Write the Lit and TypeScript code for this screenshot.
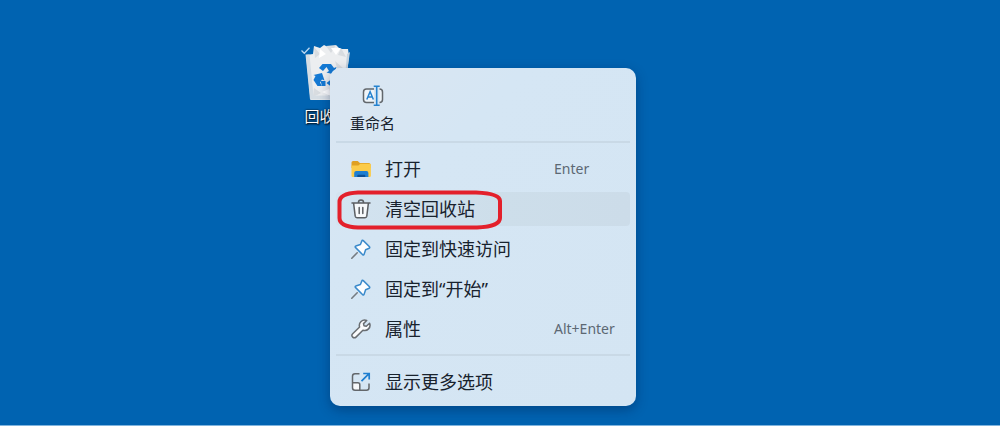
import { LitElement, html, css, svg, nothing } from "lit";
import { customElement, property } from "lit/decorators.js";

const icons = {
  folder: svg`
    <path d="M0.5 3.500a1.600 1.600 0 0 1 1.600-1.600h4.600l2.200 2h9a1.600 1.600 0 0 1 1.600 1.600V9h-19z" fill="#e0a021"/>
    <path d="M0.5 6.400h6.900l1.900-1.600h9.600a1 1 0 0 1 1 1v10.900a1.300 1.300 0 0 1-1.300 1.300H1.800a1.300 1.300 0 0 1-1.300-1.300z" fill="#fbcb49"/>
    <path d="M3.200 18v-3.900a2 2 0 0 1 2-2h10.200a2 2 0 0 1 2 2V18z" fill="#1d7fd2"/>
    <path d="M6.300 18v-1.200a1 1 0 0 1 1-1h6a1 1 0 0 1 1 1V18z" fill="#0c4f94"/>`,
  trash: svg`
    <path d="M2.600 4.200l1.600 13a1.800 1.800 0 0 0 1.800 1.500h8a1.800 1.800 0 0 0 1.800-1.500l1.600-13z" fill="#f7f9fb"/>
    <path d="M1 3.900h18M7.400 3.700a2.600 2.600 0 0 1 5.200 0M2.600 4.200l1.600 13a1.800 1.800 0 0 0 1.800 1.500h8a1.800 1.800 0 0 0 1.800-1.500l1.600-13M8.200 8.500v6M11.800 8.500v6" fill="none" stroke="#5b5e62" stroke-width="1.500" stroke-linecap="round"/>`,
  pin: svg`
    <path d="M6.200 13.800L0.8 19.200" stroke="#777c81" stroke-width="1.600" stroke-linecap="round"/>
    <path d="M12.300 1.600l6.200 6.200c.5.5.3 1.200-.3 1.400l-3.600 1.500-1.500 4.600c-.2.7-.9.9-1.400.4L4.400 8.400c-.5-.5-.3-1.200.4-1.400l4.600-1.500L10.900 1.900c.2-.6.9-.8 1.400-.3z" fill="#fbfdff" stroke="#3a8acb" stroke-width="1.500" stroke-linejoin="round"/>`,
  wrench: svg`
    <path d="M15.700 1.500a5.300 5.300 0 0 0-7.100 6.500L1.700 14.800a2.300 2.300 0 0 0 3.300 3.300l6.900-6.900a5.300 5.300 0 0 0 6.700-7l-3.300 3.100-2.300-.5-.5-2.200z" fill="#fbfcfd" stroke="#6a6e72" stroke-width="1.500" stroke-linejoin="round"/>`,
  more: svg`
    <path d="M1.500 10.700h5.300a2 2 0 0 1 2 2v5.500H4a2.500 2.500 0 0 1-2.500-2.500z" fill="#f7f9fb"/>
    <path d="M8.500 1.700H4a2.500 2.500 0 0 0-2.500 2.500v11.500A2.500 2.500 0 0 0 4 18.200h11.500a2.500 2.500 0 0 0 2.500-2.500V11.500M1.500 10.700h5.300a2 2 0 0 1 2 2v5.500" fill="none" stroke="#63676b" stroke-width="1.500"/>
    <path d="M10.500 9.200L18 1.700M12.200 1.500h6v6" fill="none" stroke="#1f7fd0" stroke-width="1.700"/>`,
};

type IconName = keyof typeof icons;

interface Entry {
  icon: IconName;
  label: string;
  shortcut?: string;
  active?: boolean;
}

const entries: Entry[] = [
  { icon: "folder", label: "打开", shortcut: "Enter" },
  { icon: "trash", label: "清空回收站", active: true },
  { icon: "pin", label: "固定到快速访问" },
  { icon: "pin", label: "固定到“开始”" },
  { icon: "wrench", label: "属性", shortcut: "Alt+Enter" },
];

@customElement("menu-entry")
class MenuEntry extends LitElement {
  @property() icon: IconName = "folder";
  @property() label = "";
  @property() shortcut = "";
  @property({ type: Boolean }) active = false;

  static styles = css`
    :host {
      display: block;
    }
    .entry {
      display: grid;
      grid-template-columns: 20px 1fr 76px;
      align-items: center;
      column-gap: 14px;
      width: 100%;
      height: 34px;
      padding: 0 0 0 15px;
      border: 0;
      border-radius: 4px;
      background: transparent;
      color: #18222d;
      font: inherit;
      font-size: 18px;
      line-height: 24px;
      text-align: left;
    }
    .active,
    .entry:hover {
      background: linear-gradient(90deg, #d3e3f0, #cddeea 55%, #ccdce9);
    }
    .icon {
      display: block;
      width: 20px;
      height: 20px;
    }
    .label {
      white-space: nowrap;
    }
    .shortcut {
      color: #5c6873;
      font-size: 14px;
      white-space: nowrap;
    }
  `;

  render() {
    return html`
      <button class="entry ${this.active ? "active" : ""}" role="menuitem">
        <svg class="icon" viewBox="0 0 20 20" aria-hidden="true">${icons[this.icon]}</svg>
        <span class="label">${this.label}</span>
        ${this.shortcut ? html`<span class="shortcut">${this.shortcut}</span>` : nothing}
      </button>
    `;
  }
}

@customElement("app-root")
class AppRoot extends LitElement {
  static styles = css`
    :host {
      display: block;
      font-family: "Noto Sans", "Noto Sans CJK SC", sans-serif;
    }
    .desktop {
      position: relative;
      box-sizing: border-box;
      min-height: 100vh;
      overflow: hidden;
      background: #0063b1;
      border-bottom: 1px solid #7fb4de;
    }
    .shortcut-tile {
      position: absolute;
      left: 300px;
      top: 42px;
      display: flex;
      flex-direction: column;
      align-items: center;
      gap: 3px;
      padding: 0;
      border: 0;
      background: none;
      color: #fff;
      font: inherit;
      font-size: 15px;
      line-height: 22px;
      text-shadow: 1px 1px 2px #000, 0 0 2px #000;
    }
    .bin {
      display: block;
      width: 54px;
      height: 60px;
    }
    .menu {
      position: absolute;
      left: 330px;
      top: 68px;
      box-sizing: border-box;
      width: 306px;
      padding: 0 6px 7px;
      border-radius: 10px;
      background: linear-gradient(135deg, #dbe6f1, #d5e6f4 30%, #d4e5f3);
      box-shadow: 0 4px 12px rgba(0, 20, 60, 0.35);
    }
    .commands {
      display: flex;
      padding: 17px 14px 7px;
    }
    .command {
      display: flex;
      flex-direction: column;
      align-items: center;
      gap: 5px;
      padding: 0;
      border: 0;
      background: none;
      color: #18222d;
      font: inherit;
      font-size: 15px;
      line-height: 22px;
    }
    .rename {
      display: block;
      width: 22px;
      height: 22px;
    }
    .rule {
      height: 2px;
      margin: 0;
      border: 0;
      background: #c9d9e6;
    }
    .list {
      display: flex;
      flex-direction: column;
      gap: 6px;
      padding: 9px 0 8px;
    }
    .last {
      padding-top: 9px;
    }
    .marker {
      position: absolute;
      left: 336px;
      top: 189px;
      width: 168px;
      height: 42px;
      pointer-events: none;
    }
  `;

  render() {
    return html`
      <main class="desktop">
        <button class="shortcut-tile">
          <svg class="bin" viewBox="0 0 54 60" aria-hidden="true">
            <path d="M6 13l7-1 1-8 6 2 4-3 6 3 6-3 4 4 8 0 1 7-5 44H10.500z" fill="#eceef0"/>
            <path d="M14 5l6 7-5 4zM26 4l5 7 5-8zM41 6l-3 7 8 2zM35 19l9 8-4 9M14 46l7 5-8 4M30 48l6 4-9 4" fill="#d8dce0"/>
            <path d="M20 7l6 5-7 4zM31 6l5 7 5-7zM22 50l7-3 4 8z" fill="#fff"/>
            <path d="M5.500 12.500L10 57.500h32.500l.5-4H13.500L9.500 12.500z" fill="#d5dde4"/>
            <path d="M43.500 53L47 12l3-2-7 47.500h-3z" fill="#c6d3de"/>
            <g fill="#1479d3">
              <path d="M19 26l3.500-4h8.500l3 4 2.500-1-2.500 7.500-7.500-2 2.500-1.500-2.500-4-3.500 4z"/>
              <path d="M13.500 33l8.500-2 2.500 7.500-2.500-1-2 3 2 3.500h-4.500l-4-6 2-4z"/>
              <path d="M34 34l4-2.500 3.500 6.500-3 5.500h-5v3l-7-5.500 7-5.500v3h3z"/>
              <path d="M20.500 39h5v5h-3.500z"/>
            </g>
            <path d="M1.500 8.500l2.800 2.800 5.200-5.500" fill="none" stroke="#b9d6f0" stroke-width="1.300"/>
          </svg>
          <span>回收站</span>
        </button>

        <section class="menu" role="menu">
          <div class="commands">
            <button class="command" role="menuitem">
              <svg class="rename" viewBox="0 0 22 22" aria-hidden="true">
                <path d="M12 4H4.500A3 3 0 0 0 1.500 7v7.500a3 3 0 0 0 3 3H12M17.500 4a3 3 0 0 1 3 3v7.500a3 3 0 0 1-3 3" fill="#eef4f9" stroke="#62676c" stroke-width="1.500"/>
                <path d="M4.800 14.500L8.100 6.700l3.300 7.800M5.900 12h4.400" fill="none" stroke="#2582cf" stroke-width="1.500"/>
                <path d="M14.700 1.300v19M11.700 1.300h6M11.700 20.300h6" fill="none" stroke="#2582cf" stroke-width="1.600"/>
              </svg>
              <span>重命名</span>
            </button>
          </div>
          <hr class="rule" />
          <div class="list">
            ${entries.map(
              (e) => html`<menu-entry
                .icon=${e.icon}
                .label=${e.label}
                .shortcut=${e.shortcut ?? ""}
                .active=${e.active ?? false}
              ></menu-entry>`
            )}
          </div>
          <hr class="rule" />
          <div class="last">
            <menu-entry .icon=${"more"} .label=${"显示更多选项"}></menu-entry>
          </div>
        </section>

        <svg class="marker" viewBox="0 0 168 42" aria-hidden="true">
          <path d="M22 3.500H140C152 4 164 6 164 12V29C164 35 154 38 141 38.500H22C10 38 3.500 35 3.500 29V13C3.500 6 12 4 22 3.500z" fill="none" stroke="#e3202b" stroke-width="4"/>
        </svg>
      </main>
    `;
  }
}
